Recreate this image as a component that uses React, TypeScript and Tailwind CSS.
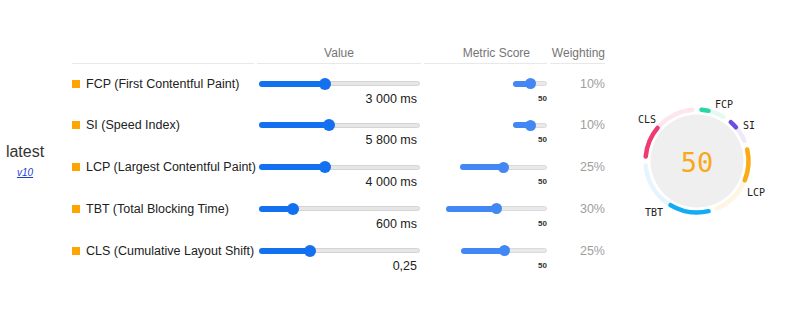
import React from 'react';

type Metric = {
  label: string;
  fill: number;
  value: string;
  scoreWidth: number;
  weight: string;
};

const metrics: Metric[] = [
  { label: 'FCP (First Contentful Paint)', fill: 66, value: '3 000 ms', scoreWidth: 34, weight: '10%' },
  { label: 'SI (Speed Index)', fill: 70, value: '5 800 ms', scoreWidth: 34, weight: '10%' },
  { label: 'LCP (Largest Contentful Paint)', fill: 66, value: '4 000 ms', scoreWidth: 87, weight: '25%' },
  { label: 'TBT (Total Blocking Time)', fill: 34, value: '600 ms', scoreWidth: 101, weight: '30%' },
  { label: 'CLS (Cumulative Layout Shift)', fill: 51, value: '0,25', scoreWidth: 86, weight: '25%' },
];

const segments = [
  { name: 'FCP', start: 0, len: 36, color: '#27d6a4', faint: '#e4f9f2', lx: 107, ly: 23 },
  { name: 'SI', start: 36, len: 36, color: '#6a4fe3', faint: '#eeeafb', lx: 132, ly: 44 },
  { name: 'LCP', start: 72, len: 90, color: '#fbab13', faint: '#fff5e3', lx: 139, ly: 111 },
  { name: 'TBT', start: 162, len: 108, color: '#12acf4', faint: '#e6f5fd', lx: 37, ly: 131 },
  { name: 'CLS', start: 270, len: 90, color: '#ef3b72', faint: '#fde7ee', lx: 30, ly: 38 },
];

const cx = 80;
const cy = 80;
const ringR = 51.5;

function point(angle: number, r: number) {
  const rad = (angle * Math.PI) / 180;
  return [cx + r * Math.sin(rad), cy - r * Math.cos(rad)];
}

function arc(a0: number, a1: number, r: number) {
  const [x0, y0] = point(a0, r);
  const [x1, y1] = point(a1, r);
  const large = a1 - a0 > 180 ? 1 : 0;
  return `M ${x0} ${y0} A ${r} ${r} 0 ${large} 1 ${x1} ${y1}`;
}

function Gauge() {
  const gap = 5;
  return (
    <svg width="160" height="160" viewBox="0 0 160 160" className="ml-[12px] mt-[81px] shrink-0">
      <circle cx={cx} cy={cy} r="46.5" fill="#efefef" />
      {segments.map((s) => (
        <g key={s.name}>
          <path
            d={arc(s.start + gap, s.start + s.len - gap, ringR)}
            fill="none"
            stroke={s.faint}
            strokeWidth="4.5"
            strokeLinecap="round"
          />
          <path
            d={arc(s.start + gap, s.start + s.len / 2 - gap, ringR)}
            fill="none"
            stroke={s.color}
            strokeWidth="4.5"
            strokeLinecap="round"
          />
          <text
            x={s.lx}
            y={s.ly}
            textAnchor="middle"
            dominantBaseline="central"
            fontFamily="'DejaVu Sans Mono', monospace"
            fontSize="10"
            fill="#222"
          >
            {s.name}
          </text>
        </g>
      ))}
      <text
        x={cx}
        y={cy + 1}
        textAnchor="middle"
        dominantBaseline="central"
        fontFamily="'DejaVu Sans Mono', monospace"
        fontSize="27"
        fill="#f7a81b"
      >
        50
      </text>
    </svg>
  );
}

function ValueSlider({ fill }: { fill: number }) {
  return (
    <div className="ml-[2px] flex h-[12px] w-[161px] items-center">
      <div className="h-[6px] rounded-l-full bg-[#1370ef]" style={{ width: fill }} />
      <div className="relative z-10 -mx-[6px] h-[12px] w-[12px] shrink-0 rounded-full bg-[#1370ef]" />
      <div className="h-[5px] flex-1 rounded-r-full border border-[#d4d4d4] bg-[#e6e6e6]" />
    </div>
  );
}

function ScoreSlider({ width }: { width: number }) {
  return (
    <div className="flex h-[12px] items-center" style={{ width }}>
      <div className="h-[6px] rounded-l-full bg-[#4287f3]" style={{ width: width / 2 }} />
      <div className="relative z-10 -mx-[5.5px] h-[11px] w-[11px] shrink-0 rounded-full bg-[#4287f3]" />
      <div className="h-[5px] flex-1 rounded-r-full border border-[#dadada] bg-[#e9e9e9]" />
    </div>
  );
}

function Row({ m }: { m: Metric }) {
  return (
    <div className="h-[41.8px] pt-[12.5px]">
      <div className="grid h-[12px] grid-cols-[182px_164px_123px_55px] items-center gap-x-[3px]">
        <div className="flex items-center whitespace-nowrap">
          <span className="h-[8px] w-[8px] shrink-0 bg-[#ffa400]" />
          <span className="ml-[6px] text-[12.5px] leading-[14px] text-[#212121]">{m.label}</span>
        </div>
        <ValueSlider fill={m.fill} />
        <div className="flex justify-end">
          <ScoreSlider width={m.scoreWidth} />
        </div>
        <div className="text-right text-[12.5px] leading-[14px] text-[#9e9e9e]">{m.weight}</div>
      </div>
      <div className="mt-[3px] grid h-[14px] grid-cols-[182px_164px_123px_55px] items-center gap-x-[3px]">
        <div />
        <div className="pr-[4px] text-right text-[12.5px] leading-[14px] text-[#212121]">{m.value}</div>
        <div className="text-right text-[8px] font-bold leading-[14px] text-[#333]">50</div>
        <div />
      </div>
    </div>
  );
}

export default function App() {
  return (
    <div className="flex h-[314px] w-[800px] overflow-hidden bg-white font-['Liberation_Sans',Arial,sans-serif]">
      <div className="w-[50px] shrink-0 pt-[143px] text-center">
        <div className="text-[16px] leading-[18px] text-[#333]">latest</div>
        <a className="mt-[6px] block text-[10px] italic leading-[12px] text-[#1a3fd0] underline">v10</a>
      </div>
      <div className="ml-[22px] w-[533px] shrink-0 pt-[46px]">
        <div className="grid grid-cols-[182px_164px_123px_55px] gap-x-[3px] text-[12px] leading-[15px] text-[#757575]">
          <div className="border-b border-[#e8e8e8] pb-[2px]" />
          <div className="border-b border-[#e8e8e8] pb-[2px] text-center">Value</div>
          <div className="border-b border-[#e8e8e8] pb-[2px] pr-[17px] text-right">Metric Score</div>
          <div className="border-b border-[#e8e8e8] pb-[2px] text-right">Weighting</div>
        </div>
        {metrics.map((m) => (
          <Row key={m.label} m={m} />
        ))}
      </div>
      <Gauge />
    </div>
  );
}
